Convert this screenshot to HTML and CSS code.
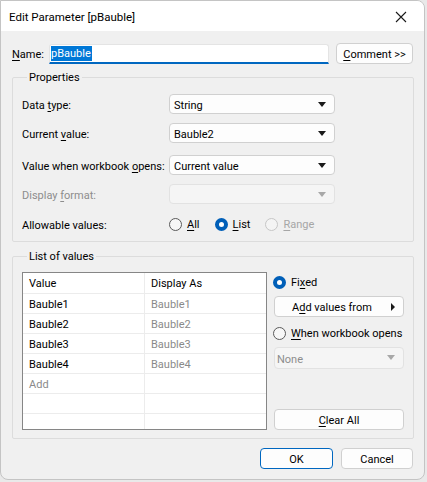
FILE: index.html
```html
<!DOCTYPE html>
<html lang="en">
  <head>
    <title>Edit Parameter [pBauble]</title>
    <meta charset="UTF-8" />
    <link rel="stylesheet" href="styles.css">
  </head>

  <body>
    <div class="window">
      <header class="titlebar">
        <span class="title">Edit Parameter [pBauble]</span>
        <span class="close">
          <svg width="12" height="12" viewBox="0 0 12 12">
            <path d="M1 1 L11 11 M11 1 L1 11" stroke="#1a1a1a" stroke-width="1.1" fill="none" />
          </svg>
        </span>
      </header>

      <div class="content">
        <div class="name-row">
          <span class="name-label"><u>N</u>ame:</span>
          <span class="text-input"><span class="selected">pBauble</span></span>
          <span class="button comment"><u>C</u>omment &gt;&gt;</span>
        </div>

        <fieldset class="group properties">
          <legend>Properties</legend>
          <div class="prop-row">
            <span class="prop-label">Data <u>t</u>ype:</span>
            <span class="select">String</span>
          </div>
          <div class="prop-row wide-gap">
            <span class="prop-label">Current <u>v</u>alue:</span>
            <span class="select">Bauble2</span>
          </div>
          <div class="prop-row">
            <span class="prop-label">Value when workbook <u>o</u>pens:</span>
            <span class="select">Current value</span>
          </div>
          <div class="prop-row disabled mid-gap">
            <span class="prop-label">Display <u>f</u>ormat:</span>
            <span class="select"></span>
          </div>
          <div class="prop-row radios">
            <span class="prop-label">Allowable values:</span>
            <span class="radio"><span class="dot"></span><u>A</u>ll</span>
            <span class="radio checked"><span class="dot"></span><u>L</u>ist</span>
            <span class="radio disabled"><span class="dot"></span><u>R</u>ange</span>
          </div>
        </fieldset>

        <fieldset class="group values">
          <legend>List of values</legend>
          <div class="values-body">
            <div class="grid-wrap">
              <table class="grid">
                <tr class="head"><td>Value</td><td>Display As</td></tr>
                <tr><td>Bauble1</td><td class="muted">Bauble1</td></tr>
                <tr><td>Bauble2</td><td class="muted">Bauble2</td></tr>
                <tr><td>Bauble3</td><td class="muted">Bauble3</td></tr>
                <tr><td>Bauble4</td><td class="muted">Bauble4</td></tr>
                <tr><td class="muted">Add</td><td></td></tr>
                <tr><td></td><td></td></tr>
                <tr><td></td><td></td></tr>
              </table>
            </div>
            <div class="side">
              <span class="radio checked fixed"><span class="dot"></span>Fi<u>x</u>ed</span>
              <span class="button add-values">A<u>d</u>d values from<span class="arrow-right"></span></span>
              <span class="radio when"><span class="dot"></span><u>W</u>hen workbook opens</span>
              <span class="select disabled-select">None</span>
              <span class="button clear"><u>C</u>lear All</span>
            </div>
          </div>
        </fieldset>

        <div class="actions">
          <span class="button ok">OK</span>
          <span class="button cancel">Cancel</span>
        </div>
      </div>
    </div>
  </body>
</html>
```

FILE: styles.css
```css
body {
  margin: 0;
  background: #e9e9e9;
  font-family: Roboto, "Noto Sans", sans-serif;
  font-size: 11px;
  color: #000;
  white-space: nowrap;
}

u {
  text-decoration-thickness: 1px;
  text-underline-offset: 2px;
}

.window {
  box-sizing: border-box;
  width: 425px;
  height: 480px;
  background: #f0f0f0;
  border: 1px solid #c4c4c4;
  border-radius: 0 8px 8px 8px;
  overflow: hidden;
}

.titlebar {
  height: 30px;
  background: #fff;
  display: flex;
  align-items: center;
  padding-left: 8px;
}

.title {
  flex: 1;
  font-size: 11.5px;
  padding-top: 1px;
}

.close {
  width: 46px;
  display: flex;
  justify-content: center;
  padding-top: 1px;
}

.content {
  padding: 12px 10px 0 11px;
}

/* name row */
.name-row {
  display: flex;
  align-items: center;
  height: 21px;
}

.name-label {
  width: 37px;
  flex-shrink: 0;
  padding-top: 2px;
}

.text-input {
  box-sizing: border-box;
  width: 280px;
  height: 20px;
  flex-shrink: 0;
  background: #fff;
  border: 1px solid #e4e4e4;
  border-bottom: 2px solid #0067c0;
  border-radius: 3px 3px 0 0;
  padding: 1px 0 0 1px;
  display: flex;
  align-items: center;
}

.selected {
  background: #0078d7;
  color: #fff;
  line-height: 15px;
  padding-right: 1px;
}

.button {
  box-sizing: border-box;
  height: 21px;
  flex-shrink: 0;
  display: flex;
  align-items: center;
  justify-content: center;
  padding-top: 2px;
  background: #fdfdfd;
  border: 1px solid #d0d0d0;
  border-radius: 4px;
  position: relative;
}

.comment {
  width: 77px;
  margin-left: 7px;
}

/* group boxes */
.group {
  margin: 0;
  border: 1px solid #dcdcdc;
  border-radius: 2px;
}

.group legend {
  margin-left: 5px;
  padding: 2px 2px 0;
  line-height: 16px;
}

.properties {
  margin-top: 4px;
  padding: 8px 10px 7px 9px;
}

.prop-row {
  display: flex;
  align-items: center;
  height: 20px;
  margin-bottom: 9px;
}

.prop-row.wide-gap {
  margin-bottom: 12px;
}

.prop-row.mid-gap {
  margin-bottom: 10px;
}

.prop-row.radios {
  margin-bottom: 0;
}

.prop-label {
  width: 147px;
  flex-shrink: 0;
  padding-top: 2px;
}

.select {
  box-sizing: border-box;
  width: 166px;
  height: 20px;
  flex-shrink: 0;
  display: flex;
  align-items: center;
  padding: 2px 0 0 4px;
  background: #fdfdfd;
  border: 1px solid #d0d0d0;
  border-radius: 4px;
  position: relative;
}

.select::after {
  content: "";
  position: absolute;
  right: 8px;
  top: 7px;
  border-left: 4px solid transparent;
  border-right: 4px solid transparent;
  border-top: 5px solid #1a1a1a;
}

.disabled {
  color: #8d8d8d;
}

.disabled .select,
.disabled-select {
  background: #f5f5f5;
  border-color: #e2e2e2;
  color: #8d8d8d;
}

.disabled .select::after,
.disabled-select::after {
  border-top-color: #a8a8a8;
}

/* radios */
.radio {
  display: flex;
  align-items: center;
  margin-right: 15px;
}

.radio .dot {
  box-sizing: border-box;
  width: 13px;
  height: 13px;
  flex-shrink: 0;
  border-radius: 50%;
  border: 1px solid #5a5a5a;
  background: #f7f7f7;
  margin-right: 5px;
}

.radio.checked .dot {
  border: 4px solid #005fb8;
  background: #fff;
}

.radio.disabled {
  color: #a6a6a6;
}

.radio.disabled .dot {
  border-color: #c6c6c6;
  background: #f4f4f4;
}

/* list of values */
.values {
  margin-top: 5px;
  padding: 7px 9px 8px 9px;
}

.values-body {
  display: flex;
  gap: 6px;
}

.grid-wrap {
  box-sizing: border-box;
  width: 245px;
  height: 158px;
  flex-shrink: 0;
  border: 1px solid #868686;
  background: #fff;
  overflow: hidden;
}

.grid {
  border-collapse: collapse;
  width: 243px;
}

.grid td {
  height: 18px;
  padding: 1px 0 0 6px;
  border-bottom: 1px solid #ececec;
  vertical-align: middle;
}

.grid .head td {
  height: 19px;
}

.grid td:first-child {
  width: 115px;
  border-right: 1px solid #ececec;
}

.muted {
  color: #8a8a8a;
}

.side {
  width: 131px;
  display: flex;
  flex-direction: column;
}

.fixed {
  height: 20px;
}

.add-values {
  margin-top: 4px;
  margin-left: 1px;
  width: 130px;
  justify-content: flex-start;
  padding-left: 17px;
}

.arrow-right {
  position: absolute;
  right: 8px;
  top: 6px;
  border-top: 4px solid transparent;
  border-bottom: 4px solid transparent;
  border-left: 4px solid #1a1a1a;
}

.when {
  height: 20px;
  margin-top: 6px;
}

.disabled-select {
  margin-top: 4px;
  margin-left: 1px;
  width: 130px;
  height: 22px;
  padding-left: 2px;
}

.clear {
  margin-top: 40px;
  margin-left: 1px;
  width: 130px;
}

/* dialog buttons */
.actions {
  display: flex;
  justify-content: flex-end;
  gap: 8px;
  margin-top: 9px;
  padding-right: 1px;
}

.ok {
  width: 73px;
  border-color: #0067c0;
}

.cancel {
  width: 72px;
}
```
